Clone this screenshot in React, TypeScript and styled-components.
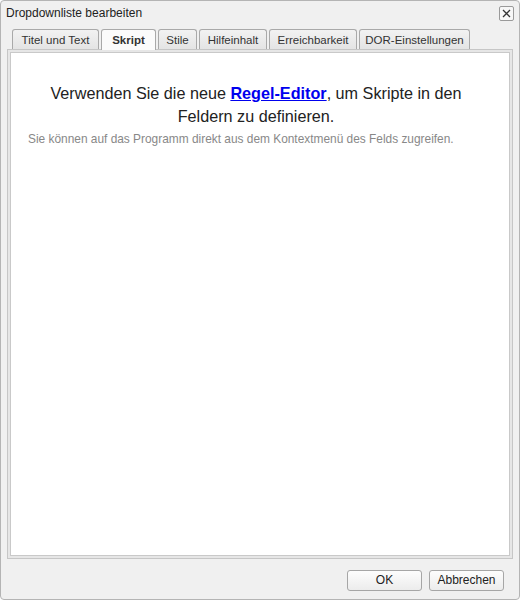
import styled, { createGlobalStyle } from 'styled-components'

const GlobalStyle = createGlobalStyle`
  html, body {
    margin: 0;
    padding: 0;
    background: #ffffff;
  }
  body {
    font-family: "Liberation Sans", "DejaVu Sans", sans-serif;
  }
`

const Dialog = styled.div`
  box-sizing: border-box;
  width: 520px;
  height: 600px;
  display: flex;
  flex-direction: column;
  background: #f0f0f0;
  border: 1px solid #b4b4b4;
  border-radius: 4px;
`

const TitleBar = styled.div`
  display: flex;
  align-items: center;
  justify-content: space-between;
  height: 24px;
  padding: 0 5px 0 5px;
`

const Title = styled.span`
  font-size: 12px;
  color: #222;
`

const CloseButton = styled.button`
  box-sizing: border-box;
  width: 15px;
  height: 15px;
  padding: 0;
  display: flex;
  align-items: center;
  justify-content: center;
  background: #f7f7f7;
  border: 1px solid #9a9a9a;
  border-radius: 2px;
  margin-top: 1px;
`

const Body = styled.div`
  flex: 1;
  display: flex;
  flex-direction: column;
  padding: 3px 6px 0 6px;
`

const TabStrip = styled.div`
  display: flex;
  gap: 2px;
  padding-left: 5px;
  height: 21px;
  align-items: flex-end;
`

const Tab = styled.div<{ $active?: boolean; $w: number }>`
  box-sizing: border-box;
  flex: none;
  width: ${p => p.$w}px;
  height: ${p => (p.$active ? 21 : 20)}px;
  display: flex;
  align-items: center;
  justify-content: center;
  font-size: 11.5px;
  font-weight: ${p => (p.$active ? 700 : 400)};
  color: #333;
  background: ${p => (p.$active ? '#fbfbfb' : 'linear-gradient(#f2f2f2, #e4e4e4)')};
  border: 1px solid #a9a9a9;
  border-bottom: none;
  border-radius: 3px 3px 0 0;
  position: relative;
  z-index: ${p => (p.$active ? 2 : 1)};
  margin-bottom: ${p => (p.$active ? -1 : 0)}px;
`

const Panel = styled.div`
  box-sizing: border-box;
  height: 510px;
  padding: 2px;
  background: #e6e6e6;
  border: 1px solid #c6c6c6;
`

const PanelInner = styled.div`
  box-sizing: border-box;
  height: 100%;
  background: #ffffff;
  border: 1px solid #c9c9c9;
  padding: 29px 24px 0 16px;
`

const Lead = styled.p`
  margin: 0;
  text-align: center;
  font-size: 16.2px;
  line-height: 23px;
  color: #222;
`

const EditorLink = styled.a`
  color: #0000ee;
  font-weight: 700;
  text-decoration: underline;
`

const Hint = styled.p`
  margin: 4px 0 0 1px;
  font-size: 11.9px;
  color: #888;
  white-space: nowrap;
`

const Footer = styled.div`
  flex: 1;
  display: flex;
  justify-content: flex-end;
  align-items: center;
  gap: 7px;
  padding: 2px 15px 0 0;
`

const Button = styled.button`
  box-sizing: border-box;
  width: 75px;
  height: 21px;
  font-family: "Liberation Sans", "DejaVu Sans", sans-serif;
  font-size: 12px;
  color: #222;
  background: linear-gradient(#fdfdfd, #ececec);
  border: 1px solid #a6a6a6;
  border-radius: 3px;
  padding: 0;
`

const tabs = [
  { label: 'Titel und Text', w: 87 },
  { label: 'Skript', w: 55, active: true },
  { label: 'Stile', w: 39 },
  { label: 'Hilfeinhalt', w: 68 },
  { label: 'Erreichbarkeit', w: 88 },
  { label: 'DOR-Einstellungen', w: 111 },
]

export default function App() {
  return (
    <>
      <GlobalStyle />
      <Dialog>
        <TitleBar>
          <Title>Dropdownliste bearbeiten</Title>
          <CloseButton aria-label="Schließen">
            <svg width="9" height="9" viewBox="0 0 9 9">
              <path d="M1 1 L8 8 M8 1 L1 8" stroke="#333" strokeWidth="1.3" />
            </svg>
          </CloseButton>
        </TitleBar>
        <Body>
          <TabStrip>
            {tabs.map(t => (
              <Tab key={t.label} $w={t.w} $active={t.active}>
                {t.label}
              </Tab>
            ))}
          </TabStrip>
          <Panel>
            <PanelInner>
              <Lead>
                Verwenden Sie die neue <EditorLink href="#">Regel-Editor</EditorLink>, um Skripte in den<br />
                Feldern zu definieren.
              </Lead>
              <Hint>Sie können auf das Programm direkt aus dem Kontextmenü des Felds zugreifen.</Hint>
            </PanelInner>
          </Panel>
        </Body>
        <Footer>
          <Button>OK</Button>
          <Button>Abbrechen</Button>
        </Footer>
      </Dialog>
    </>
  )
}
